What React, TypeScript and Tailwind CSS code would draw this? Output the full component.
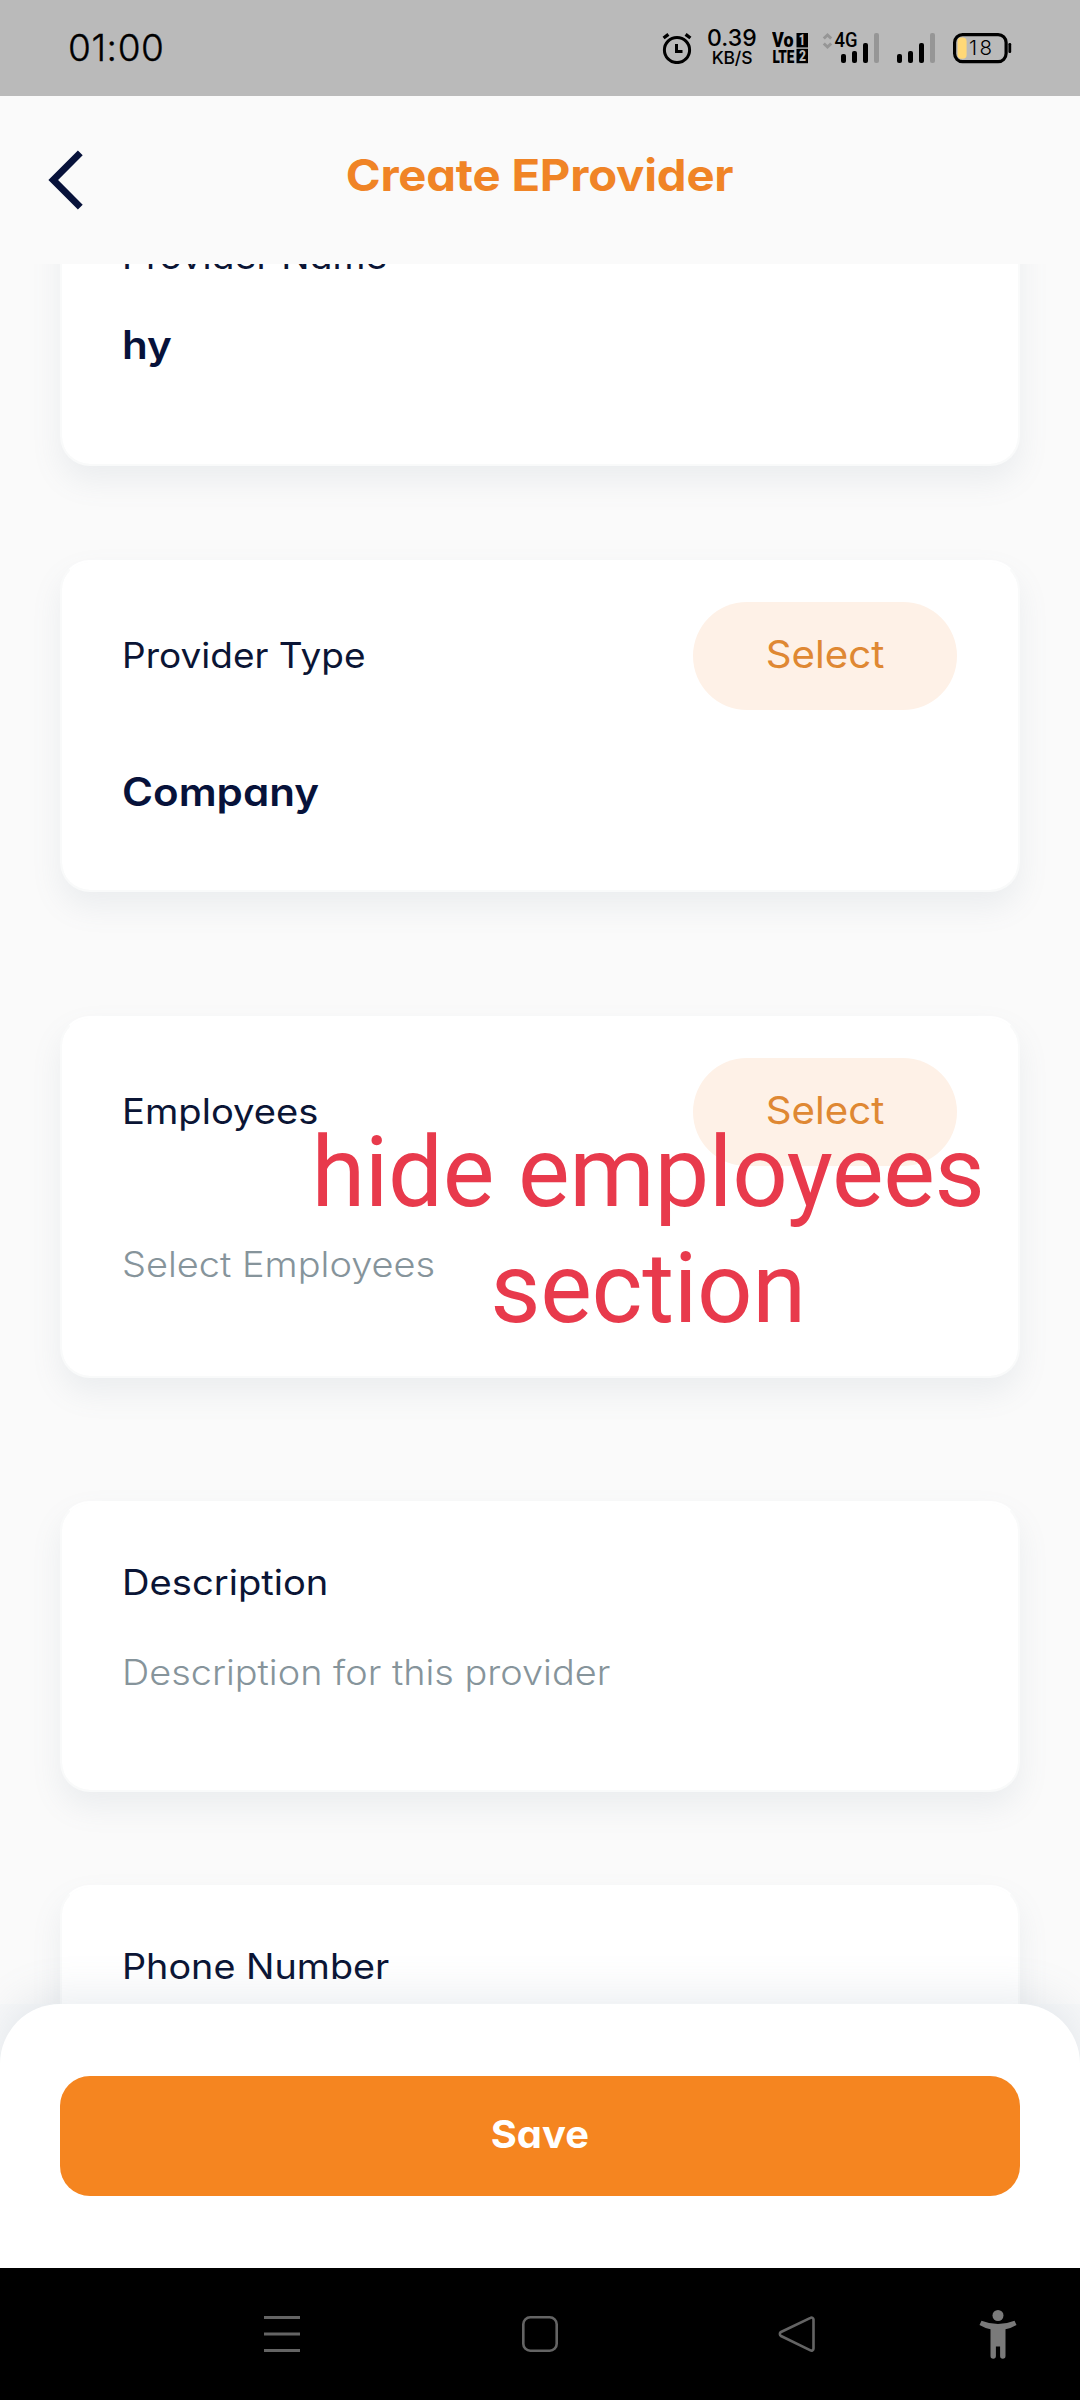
import React from "react";

function AlarmIcon() {
  return (
    <svg className="h-[32px] w-[30px]" viewBox="0 0 30 32" fill="none" stroke="#000" strokeWidth="3">
      <circle cx="15" cy="18" r="12.6" />
      <path d="M1.6 6 6.4 2.4M23.6 2.4 28.4 6" strokeWidth="3.4" />
      <path d="M14.5 12v7.4h6" />
    </svg>
  );
}

function VolteIcon() {
  return (
    <svg className="h-[32px] w-[36px] font-['Roboto',sans-serif] font-black" viewBox="0 0 36 32">
      <text x="0" y="15.2" fontSize="19.5" textLength="21.5" lengthAdjust="spacingAndGlyphs">Vo</text>
      <text x="0.4" y="31" fontSize="18.5" textLength="22" lengthAdjust="spacingAndGlyphs">LTE</text>
      <rect x="24.5" y="1" width="11.5" height="14.4" />
      <rect x="24.5" y="16.8" width="11.5" height="14.4" />
      <text x="26.8" y="13" fontSize="14" fill="#bababa" textLength="6.4" lengthAdjust="spacingAndGlyphs">1</text>
      <text x="27" y="29" fontSize="14" fill="#bababa" textLength="7" lengthAdjust="spacingAndGlyphs">2</text>
    </svg>
  );
}

function Bars({ x }: { x: number }) {
  return (
    <g>
      <rect x={x} y="22" width="5" height="9" rx="2" />
      <rect x={x + 11} y="19" width="5" height="12" rx="2" />
      <rect x={x + 22} y="11" width="5" height="20" rx="2" />
      <rect x={x + 33} y="1" width="5" height="30" rx="2" fill="#969696" />
    </g>
  );
}

function StatusBar() {
  return (
    <div className="flex h-[96px] shrink-0 items-start bg-[#bababa] pr-[68px] pl-[68px] text-black">
      <div className="mt-[25px] text-[37px] leading-[46px] font-light tracking-[0.6px] [-webkit-text-stroke:0.35px_black]">01:00</div>
      <div className="mt-[32px] ml-auto flex items-start">
        <AlarmIcon />
        <div className="-mt-[6px] ml-[15px] flex w-[50px] flex-col items-center font-medium whitespace-nowrap">
          <span className="text-[23px] leading-[24px] tracking-[0.1px]">0.39</span>
          <span className="-mt-[2px] text-[17.5px] leading-[20px] tracking-[-0.2px]">KB/S</span>
        </div>
        <div className="ml-[15px]">
          <VolteIcon />
        </div>
        <svg className="ml-[14px] h-[32px] w-[58px]" viewBox="0 0 58 32">
          <path d="M1.8 6.5 5.5 3l3.7 3.5M1.8 11.5 5.5 15l3.7-3.5" fill="none" stroke="#969696" strokeWidth="3" />
          <text x="12.5" y="15" fontSize="20" textLength="23" lengthAdjust="spacingAndGlyphs" className="font-['Roboto',sans-serif] font-medium">4G</text>
          <Bars x={19} />
        </svg>
        <svg className="ml-[17px] h-[32px] w-[38px]" viewBox="0 0 38 32">
          <Bars x={0} />
        </svg>
        <svg className="ml-[17px] h-[32px] w-[60px]" viewBox="0 0 60 32">
          <rect x="2.6" y="2.6" width="51.5" height="27" rx="8" fill="none" stroke="#000" strokeWidth="3.2" />
          <rect x="5.6" y="5.4" width="9" height="21.4" rx="4" fill="#ffd877" />
          <rect x="56.4" y="11" width="2.8" height="10" rx="1.2" />
          <text x="17" y="23" fontSize="20.5" textLength="23" className="font-['Inter',sans-serif] font-light">18</text>
        </svg>
      </div>
    </div>
  );
}

function Header() {
  return (
    <header className="relative flex h-[168px] shrink-0 items-start justify-center bg-[#fafafa]">
      <svg className="absolute top-[52px] left-[46px] h-[64px] w-[40px]" viewBox="0 0 40 64" fill="none" stroke="#07123a" strokeWidth="6.8">
        <path d="M34.3 4.8 7.2 32l27.1 27.2" />
      </svg>
      <h1 className="mt-[49px] scale-x-[1.062] text-[44.5px] leading-[60px] font-bold tracking-[-0.2px] text-[#f08426]">Create EProvider</h1>
    </header>
  );
}

function Card({ className, children }: { className: string; children: React.ReactNode }) {
  return (
    <section
      className={`relative shrink-0 rounded-[30px] border-2 border-[#f9fafa] border-t-white bg-white bg-clip-padding pr-[60px] pl-[60px] shadow-[0_15px_30px_rgba(120,138,158,0.11)] ${className}`}
    >
      {children}
    </section>
  );
}

function SelectButton() {
  return (
    <button className="flex h-[108px] w-[264px] items-center justify-center rounded-full bg-[#fef1e7] pb-[5px] text-[#df8833]">
      <span className="scale-x-[1.06] text-[38px] leading-[54px]">Select</span>
    </button>
  );
}

const label = "w-fit origin-left text-[35px] leading-[50px] text-[#0b1535]";
const value = "w-fit origin-left text-[39px] leading-[54px] font-semibold text-[#07123a]";
const hint = "w-fit origin-left text-[35px] leading-[50px] font-light text-[#86949b]";

export default function App() {
  return (
    <div className="flex h-[2400px] w-[1080px] flex-col overflow-hidden bg-[#fafafa] font-['Inter',sans-serif] [font-feature-settings:'cv11']">
      <StatusBar />
      <Header />
      <main className="flex h-[1740px] shrink-0 flex-col overflow-hidden px-[60px]">
        <Card className="-mt-[89px] h-[291px] pt-[54px]">
          <div className={`${label} scale-x-[1.074]`}>Provider Name</div>
          <div className={`${value} mt-[37px] scale-x-[1.08]`}>hy</div>
        </Card>
        <Card className="mt-[94px] h-[332px] pt-[40px]">
          <div className="mr-[1px] flex items-center justify-between">
            <span className={`${label} -mt-[2px] scale-x-[1.058]`}>Provider Type</span>
            <SelectButton />
          </div>
          <div className={`${value} mt-[55px] scale-x-[1.08]`}>Company</div>
        </Card>
        <Card className="mt-[124px] h-[362px] pt-[40px]">
          <div className="mr-[1px] flex items-center justify-between">
            <span className={`${label} -mt-[2px] scale-x-[1.09]`}>Employees</span>
            <SelectButton />
          </div>
          <div className={`${hint} mt-[73px] scale-x-[1.084]`}>Select Employees</div>
          <div className="absolute top-[97px] left-[236px] w-[700px] text-center font-['Roboto',sans-serif] text-[97.5px] leading-[116px] tracking-[-0.35px] whitespace-nowrap text-[#e83a4c]">
            <div>hide employees</div>
            <div>section</div>
          </div>
        </Card>
        <Card className="mt-[123px] h-[291px] pt-[54px]">
          <div className={`${label} scale-x-[1.09]`}>Description</div>
          <div className={`${hint} mt-[40px] scale-x-[1.082]`}>Description for this provider</div>
        </Card>
        <Card className="mt-[93px] h-[291px] pt-[54px]">
          <div className={`${label} scale-x-[1.079]`}>Phone Number</div>
        </Card>
      </main>
      <footer className="relative h-[264px] shrink-0 bg-[#f7f8f9]">
        <div className="h-full rounded-t-[60px] bg-white px-[60px] pt-[72px] shadow-[0_-10px_40px_rgba(120,138,158,0.15)]">
          <button className="flex h-[120px] w-full items-center justify-center rounded-[30px] bg-[#f58520] pb-[5px] text-white">
            <span className="scale-x-[1.05] text-[38px] leading-[54px] font-bold">Save</span>
          </button>
        </div>
      </footer>
      <nav className="relative flex h-[132px] shrink-0 items-start bg-black pt-[41px]">
        <svg className="ml-[262px] h-[50px] w-[40px]" viewBox="0 0 40 50" stroke="#646464" strokeWidth="3">
          <path d="M2 8.5h36M2 25h36M2 41.5h36" />
        </svg>
        <svg className="ml-[218px] h-[50px] w-[40px]" viewBox="0 0 40 50" fill="none" stroke="#646464" strokeWidth="2.6">
          <rect x="3.3" y="8.3" width="33.4" height="33.4" rx="7" />
        </svg>
        <svg className="ml-[217px] h-[50px] w-[40px]" viewBox="0 0 40 50" fill="none" stroke="#646464" strokeWidth="2.6" strokeLinejoin="round">
          <path d="M33.5 8.8 4 23a2.3 2.3 0 0 0 0 4l29.5 14.3a2 2 0 0 0 3-1.8V10.5a2 2 0 0 0-3-1.7Z" />
        </svg>
        <svg className="ml-[159px] h-[50px] w-[44px]" viewBox="0 0 44 50" fill="#7a7a7a">
          <circle cx="22" cy="6.5" r="5.5" />
          <path d="M5.5 11.7Q22 18.300 38.5 11.7L40.500 16Q35.500 19 29.500 20.300V47a2.500 2.500 0 0 1-5.400 0V37.500h-4.200V47a2.500 2.500 0 0 1-5.400 0V20.300Q8.500 19 3.500 16Z" />
        </svg>
      </nav>
    </div>
  );
}
